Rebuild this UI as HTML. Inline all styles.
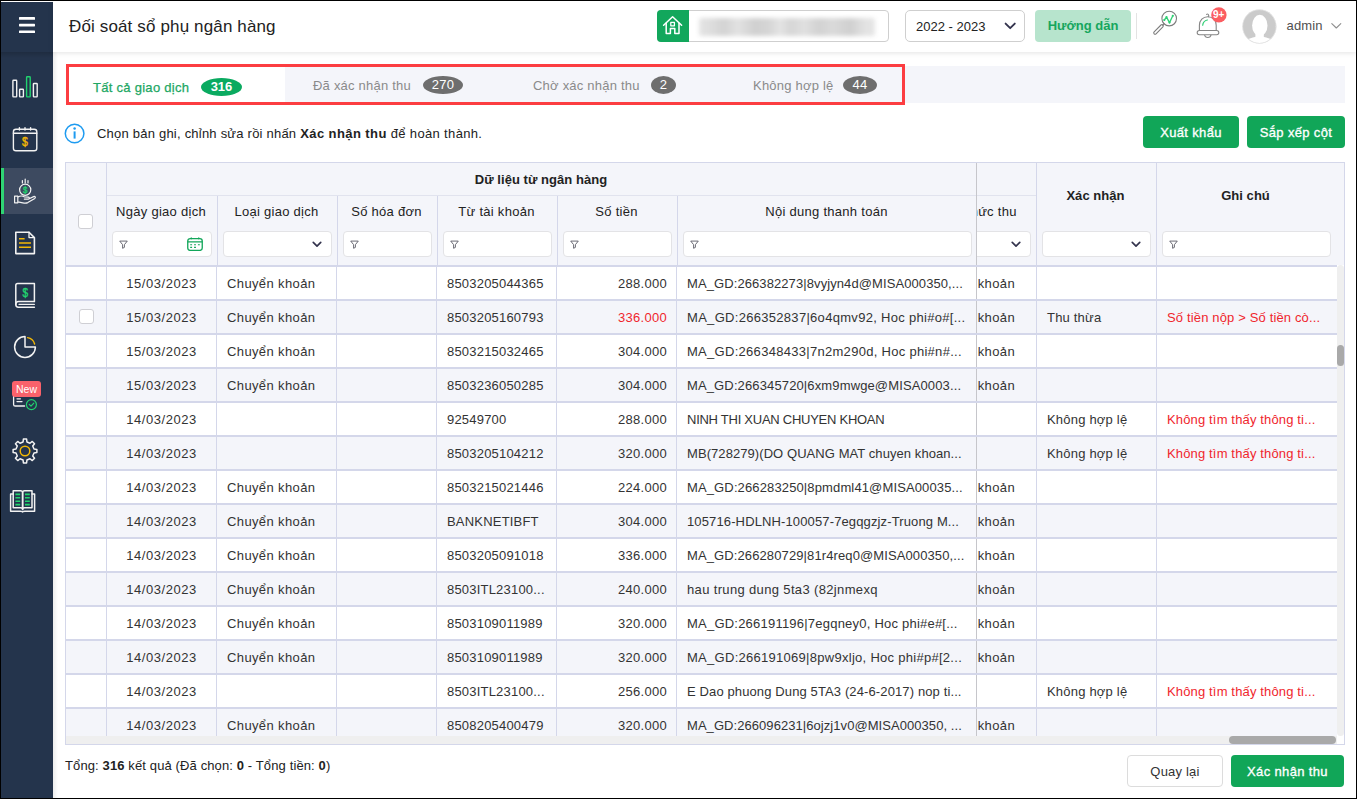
<!DOCTYPE html>
<html lang="vi">
<head>
<meta charset="utf-8">
<title>Đối soát sổ phụ ngân hàng</title>
<style>
*{box-sizing:border-box;margin:0;padding:0}
html,body{width:1357px;height:799px;overflow:hidden;background:#fff}
body{font-family:"Liberation Sans",sans-serif;font-size:13px;color:#222;position:relative}
.abs{position:absolute}
#frame{position:absolute;left:0;top:0;width:1357px;height:799px;border:1px solid #000;z-index:100;pointer-events:none}
/* sidebar */
#side{position:absolute;left:1px;top:2px;width:52px;height:796px;background:#24344c}
#side .top{position:absolute;left:0;top:0;width:52px;height:51px;background:#24344c}
#side .active{position:absolute;left:0;top:166px;width:52px;height:46px;background:#3d4a60;border-left:3px solid #2fd574}
#side svg{position:absolute;overflow:visible}
/* header */
#hdr{position:absolute;left:53px;top:1px;width:1303px;height:51px;background:#fff;box-shadow:0 1px 5px rgba(0,0,0,.11);z-index:2}
#sideshadow{position:absolute;left:53px;top:52px;width:5px;height:746px;background:linear-gradient(90deg,rgba(0,0,0,.07),rgba(0,0,0,0));z-index:1}
#sideband{position:absolute;left:1px;top:52px;width:52px;height:6px;background:linear-gradient(180deg,rgba(0,0,0,.16),rgba(0,0,0,0));z-index:3}
#title{z-index:3;position:absolute;left:69px;top:16px;font-size:17px;line-height:22px;color:#222;white-space:nowrap;letter-spacing:.14px}
#org{z-index:3;position:absolute;left:657px;top:10px;width:232px;height:32px;border:1px solid #cfcfcf;border-radius:4px;background:#fff}
#org .g{position:absolute;left:-1px;top:-1px;width:32px;height:32px;background:#12a75c;border-radius:4px 0 0 4px}
#org .blur{position:absolute;left:41px;top:7px;width:176px;height:18px;background:linear-gradient(90deg,#e4e4e4 0,#dcdcdc 8%,#d3d3d3 14%,#e2e2e2 22%,#d0d0d0 32%,#d6d6d6 40%,#e4e4e4 46%,#d6d6d6 52%,#e0e0e0 60%,#d2d2d2 68%,#dadada 76%,#d0d0d0 86%,#e2e2e2 94%,#e6e6e6 100%);filter:blur(2.2px);border-radius:2px}
#year{z-index:3;position:absolute;left:905px;top:10px;width:120px;height:32px;border:1px solid #cfcfcf;border-radius:5px;background:#fff}
#year span{position:absolute;left:10px;top:8px;line-height:16px;font-size:13px;color:#222}
#guide{z-index:3;position:absolute;left:1035px;top:10px;width:96px;height:32px;border-radius:4px;background:#b7e4cd;color:#16a65d;font-weight:bold;font-size:13px;line-height:32px;text-align:center}
#sep{z-index:3;position:absolute;left:1136px;top:13px;width:1px;height:26px;background:#e3e3e3}
#admin{z-index:3;position:absolute;left:1286.5px;top:18px;font-size:13px;line-height:16px;color:#505050;letter-spacing:.15px}
/* tabs */
#tabs{position:absolute;left:66px;top:66px;width:1279px;height:37px;background:#f4f5fa}
#tabs .act{position:absolute;left:0;top:0;width:219px;height:37px;background:#fff}
#redbox{position:absolute;left:66px;top:64px;width:839px;height:41px;border:3px solid #fc3d41}
.tab{position:absolute;top:78px;font-size:13px;line-height:16px;color:#8a8a8a;white-space:nowrap;letter-spacing:.22px}
.badge{position:absolute;top:76px;height:18px;border-radius:50%;background:#6e6e6e;color:#fff;font-size:13px;line-height:18px;text-align:center;letter-spacing:.3px}
/* info row */
#info{position:absolute;left:97px;top:126px;font-size:13px;line-height:16px;color:#222;white-space:nowrap;letter-spacing:.22px}
.gbtn{position:absolute;height:32px;border-radius:4px;background:#11a658;color:#fff;font-weight:normal;-webkit-text-stroke:.32px #fff;letter-spacing:.35px;font-size:13px;line-height:34px;text-align:center;white-space:nowrap}
/* table */
#tbl{position:absolute;left:65px;top:162px;width:1280px;height:583px;border:1px solid #d4d7ea;background:#fff;overflow:hidden}
#thead{position:absolute;left:66px;top:163px;width:1271px;height:103px;background:#f4f5fa}
.vl{position:absolute;width:1px;background:#d4d7ea}
.hl{position:absolute;height:1px;background:#e1e3ee}
.th{position:absolute;font-size:13px;line-height:16px;color:#222;text-align:center;white-space:nowrap;letter-spacing:.28px}
.th.b{font-weight:bold;letter-spacing:.05px}
.fi{position:absolute;top:231px;height:26px;border:1px solid #e3e3e6;border-radius:4px;background:#fff}
.row{position:absolute;left:66px;width:1271px;height:34px;border-top:2px solid #d4d7ea;background:#fff}
.row.alt{background:#f4f5fa}
.c{position:absolute;top:0;height:32px;line-height:33px;font-size:13px;color:#333;white-space:nowrap;overflow:hidden;border-left:1px solid #d4d7ea;letter-spacing:.2px}
.c0{left:0;width:40px;border-left:0}
.c1{left:40px;width:110px;text-align:center;letter-spacing:.55px;padding-left:0}
.c2{left:150px;width:120px;padding-left:10px;letter-spacing:.38px}
.c3{left:270px;width:100px}
.c4{left:370px;width:120px;padding-left:10px}
.c5{left:490px;width:120px;text-align:right;padding-right:9px;letter-spacing:.3px}
.c6{left:610px;width:300px;padding-left:10px;letter-spacing:.12px}
.c7{left:910px;width:60px;border-left:1px solid #c6c6cb;padding-left:0}
.c7 span{position:absolute;right:21px;top:0;letter-spacing:.38px}
.c8{left:970px;width:120px;padding-left:10px}
.c9{left:1090px;width:181px;padding-left:10px;letter-spacing:.15px}
.red{color:#f0262d}
.cb{position:absolute;left:13px;top:8px;width:15px;height:15px;border:1px solid #cfcfd4;border-radius:3px;background:#fff}
#foot{position:absolute;left:65px;top:758px;font-size:13px;line-height:16px;color:#222;white-space:nowrap;letter-spacing:.12px}
#back{position:absolute;left:1127px;top:755px;width:96px;height:32px;border:1px solid #dcdcdc;border-radius:4px;background:#fff;color:#333;font-size:13px;line-height:32px;text-align:center;letter-spacing:.2px}
</style>
</head>
<body>
<!-- sidebar -->
<div id="side">
  <div class="top"></div>
  <div class="active"></div>
  <svg class="abs" style="left:-1px;top:-2px;z-index:5" width="54" height="799" viewBox="0 0 54 799" fill="none" stroke-linecap="round" stroke-linejoin="round">
<!-- hamburger -->
<g fill="#fff" stroke="none"><rect x="19" y="17" width="16" height="2.8" rx=".6"/><rect x="19" y="23.8" width="16" height="2.6" rx=".6"/><rect x="19" y="30.4" width="16" height="2.7" rx=".6"/></g>
<!-- bar chart -->
<g stroke="#f2f2f2" stroke-width="1.4"><rect x="12.9" y="80.3" width="3.8" height="16.6" rx=".6"/><rect x="19.6" y="89.3" width="3.8" height="7.6" rx=".6"/><rect x="33.4" y="83.5" width="3.8" height="13.4" rx=".6"/><rect x="26.6" y="76.8" width="3.6" height="20.1" rx=".6" stroke="#21d36f"/></g>
<!-- calendar -->
<g stroke="#f2f2f2" stroke-width="1.4"><rect x="13.4" y="129.2" width="23.4" height="21.6" rx="2.6"/><path d="M13.4 133.2H36.8"/><path d="M19.4 127.6v2.4M25 127.6v2.4M30.6 127.6v2.4"/></g>
<text transform="translate(24.8 146) scale(.84 1)" text-anchor="middle" font-family="Liberation Sans, sans-serif" font-size="12.5" fill="#f2b705" stroke="#f2b705" stroke-width=".45">$</text>
<!-- hand coin -->
<g stroke="#f2f2f2" stroke-width="1.2"><circle cx="25.2" cy="189.8" r="5.6"/><path d="M22.4 180.6v2.4M25.2 179v4M28 180.6v2.4"/><path d="M14.6 196.2h3.2v6.6h-3.2zM17.8 197.2c2.4-1.6 4.6-1.6 6.8-.2l3.8 .2c1.2.2 1.2 1.8 0 2h-4M28.6 199l5-2.4c1.4-.6 2.4.8 1.2 1.8l-7 4.2c-1.4.6-3 .6-5 .2l-5-1"/></g>
<text transform="translate(25.2 193) scale(.84 1)" text-anchor="middle" font-family="Liberation Sans, sans-serif" font-size="9.5" fill="#21d36f" stroke="#21d36f" stroke-width=".4">$</text>
<!-- document -->
<g stroke="#f2f2f2" stroke-width="1.6"><path d="M15.8 232.2H29L34.4 237.6V253.6H15.8Z"/><path d="M29 232.2V237.6H34.4" stroke-width="1.3"/></g>
<g stroke="#f2b705" stroke-width="1.5" stroke-linecap="butt"><path d="M19 238.8H24.6M19 243H31M19 247.2H31"/></g>
<!-- book $ -->
<g stroke="#f2f2f2" stroke-width="1.5"><path d="M34.4 301.6V283.4H17.6C16.4 283.4 15.8 284.2 15.8 285.4V304.6"/><path d="M34.4 301.6H18.4C16.8 301.6 15.8 302.8 15.8 304.6S16.8 307.2 18.4 307.2H34.4" /><path d="M19 304.4H34.4" stroke-width="1.1"/></g>
<text transform="translate(25.3 296.6) scale(.84 1)" text-anchor="middle" font-family="Liberation Sans, sans-serif" font-size="12" fill="#21d36f" stroke="#21d36f" stroke-width=".45">$</text>
<!-- pie -->
<g stroke="#f2f2f2" stroke-width="1.5"><path d="M25 336.6A10.4 10.4 0 1 0 35.4 347H25Z"/></g>
<path d="M27.6 337.6A8.6 8.6 0 0 1 34.6 344" stroke="#f2b705" stroke-width="1.4"/>
<!-- list check (under New) -->
<g stroke="#f2f2f2" stroke-width="1.3"><path d="M13.6 396V404.4C13.6 405.4 14.2 406 15.2 406H24.6"/><path d="M17 398.8H20.4M17 401.6H22"/></g>
<circle cx="31.4" cy="404.6" r="5" stroke="#21d36f" stroke-width="1.2"/><path d="M29.2 404.4L31 406.2L33.8 403.2" stroke="#21d36f" stroke-width="1.2"/>
<!-- gear -->
<path d="M23.06 442.01 L23.40 439.11 L26.60 439.11 L26.94 442.01 L29.99 443.27 L32.28 441.46 L34.54 443.72 L32.73 446.01 L33.99 449.06 L36.89 449.40 L36.89 452.60 L33.99 452.94 L32.73 455.99 L34.54 458.28 L32.28 460.54 L29.99 458.73 L26.94 459.99 L26.60 462.89 L23.40 462.89 L23.06 459.99 L20.01 458.73 L17.72 460.54 L15.46 458.28 L17.27 455.99 L16.01 452.94 L13.11 452.60 L13.11 449.40 L16.01 449.06 L17.27 446.01 L15.46 443.72 L17.72 441.46 L20.01 443.27Z" stroke="#f2f2f2" stroke-width="1.5"/>
<circle cx="25" cy="451" r="4.8" stroke="#f2b705" stroke-width="1.5"/>
<!-- open book -->
<g stroke="#f2f2f2" stroke-width="1.5"><path d="M13.2 490.8H20.6C22 490.8 22.6 491.4 22.6 492.6V509.4C22.6 508.4 22 507.8 20.6 507.8H13.2Z"/><path d="M32 490.8H24.6C23.2 490.8 22.6 491.4 22.6 492.6V509.4C22.6 508.4 23.2 507.8 24.6 507.8H32Z"/><path d="M13.2 494H10.6V511.2H20.4C21.6 511.2 22.6 511.6 22.6 512C22.6 511.6 23.6 511.2 24.8 511.2H34.6V494H32"/></g>
<g stroke="#21d36f" stroke-width="1.6" stroke-linecap="butt"><path d="M15.4 494.4H20.2M15.4 497.8H20.2M15.4 501.2H20.2M15.4 504.6H20.2M25 494.4H29.8M25 497.8H29.8M25 501.2H29.8M25 504.6H29.8"/></g>
</svg>
<div class="abs" style="left:11px;top:379px;width:29px;height:16px;border-radius:3px;background:#fa626b;color:#fff;font-size:10.5px;line-height:16px;text-align:center;z-index:6">New</div>

</div>

<!-- header -->
<div id="hdr"></div><div id="sideshadow"></div><div id="sideband"></div>
<div id="title">Đối soát sổ phụ ngân hàng</div>
<div id="org"><div class="g"></div><div class="blur"></div></div>
<div id="year"><span>2022 - 2023</span></div>
<div id="guide">Hướng dẫn</div>
<div id="sep"></div>
<div id="admin">admin</div>
<svg class="abs" style="left:0;top:0;z-index:4" width="1357" height="160" viewBox="0 0 1357 160" fill="none" stroke-linecap="round" stroke-linejoin="round">
<!-- home -->
<g stroke="#fff" stroke-width="1.5"><path d="M663.6 25.2L672.6 16.8L681.6 25.2"/><path d="M666.2 23.2V33.6H670.4V28.6H674.8V33.6H679V23.2" /><rect x="670.8" y="22.4" width="3.6" height="3.4" stroke-width="1.3"/></g>
<!-- year chevron -->
<path d="M1005.6 23.6L1010.2 28.2L1014.8 23.6" stroke="#33334d" stroke-width="1.9"/>
<!-- magnifier -->
<g stroke="#7d7d7d" stroke-width="1.1"><circle cx="1169.2" cy="18.6" r="7.3"/><path d="M1164.1 23.7L1162.6 25.2"/><rect x="-1.35" y="0" width="2.7" height="12.4" rx="1.35" transform="translate(1162.9 25) rotate(45)"/></g>
<path d="M1164.3 20L1166.5 17.1L1169.5 22.6L1172.8 15.8" stroke="#2fcf74" stroke-width="1.3"/>
<g fill="#2fcf74"><circle cx="1164.3" cy="20" r="1.1"/><circle cx="1166.5" cy="17.1" r="1.1"/><circle cx="1169.5" cy="22.6" r="1.1"/><circle cx="1172.8" cy="15.8" r="1.1"/></g>
<!-- bell -->
<g stroke="#858585" stroke-width="1.1"><path d="M1199.4 30.6V25.2C1199.4 20.4 1203 16.7 1207.8 16.7C1212.6 16.7 1216.2 20.4 1216.2 25.2V30.6"/><path d="M1208.6 16.6C1209.2 14.6 1207.6 13.4 1206.6 14.4"/><path d="M1204.6 35C1205.2 38.4 1210.4 38.4 1211 35"/><rect x="1197.2" y="30.5" width="21.6" height="4.2" rx="2.1" fill="#fff"/></g>
<path d="M1202.7 25.2C1203 22.6 1204.8 20.6 1207.4 20" stroke="#2fcf74" stroke-width="1.2"/>
<circle cx="1218.9" cy="14.9" r="7.7" fill="#fb5d61"/>
<text x="1218.7" y="18.4" text-anchor="middle" font-family="Liberation Sans, sans-serif" font-weight="bold" font-size="10" fill="#fff">9+</text>
<!-- avatar -->
<circle cx="1259.4" cy="26.5" r="17" fill="#cbcbcb"/>
<clipPath id="avc"><circle cx="1259.4" cy="26.5" r="16.6"/></clipPath>
<g clip-path="url(#avc)" fill="#fff"><ellipse cx="1259.8" cy="25.4" rx="7.7" ry="10.6"/><path d="M1255.4 30H1263.8V40H1255.4Z"/><ellipse cx="1259.5" cy="48.4" rx="17.5" ry="12"/></g>
<circle cx="1259.4" cy="26.5" r="16.8" stroke="#ececec" stroke-width=".6"/>
<!-- admin chevron -->
<path d="M1331.8 23.6L1336.3 28L1340.8 23.6" stroke="#8f8f8f" stroke-width="1.1"/>
<!-- info icon -->
<circle cx="74.6" cy="133.5" r="9.3" stroke="#1e9bf0" stroke-width="1.5"/>
<path d="M74.6 131.4V138.6" stroke="#1e9bf0" stroke-width="2" stroke-linecap="butt"/><circle cx="74.6" cy="128.5" r="1.25" fill="#1e9bf0"/>
</svg>


<!-- tabs -->
<div id="tabs"><div class="act"></div></div>
<div class="tab" style="left:93px;top:80px;color:#21a763;-webkit-text-stroke:.25px #21a763;letter-spacing:.28px">Tất cả giao dịch</div>
<div class="badge" style="left:201px;top:78px;width:41px;background:#0aaa60;font-weight:bold;letter-spacing:0">316</div>
<div class="tab" style="left:313px">Đã xác nhận thu</div>
<div class="badge" style="left:423px;width:40px">270</div>
<div class="tab" style="left:533px">Chờ xác nhận thu</div>
<div class="badge" style="left:651px;width:25px">2</div>
<div class="tab" style="left:753px">Không hợp lệ</div>
<div class="badge" style="left:843px;width:34px">44</div>
<div id="redbox"></div>

<!-- info -->
<div id="info">Chọn bản ghi, chỉnh sửa rồi nhấn <b style="letter-spacing:.42px">Xác nhận thu</b><span style="letter-spacing:.34px"> để hoàn thành.</span></div>
<div class="gbtn" style="left:1143px;top:116px;width:96px">Xuất khẩu</div>
<div class="gbtn" style="left:1247px;top:116px;width:98px">Sắp xếp cột</div>

<!-- table -->
<div id="tbl"></div>
<div id="thead"></div>
<div class="row" style="top:265px">
<div class="c c0"></div><div class="c c1">15/03/2023</div><div class="c c2">Chuyển khoản</div><div class="c c3"></div><div class="c c4">8503205044365</div><div class="c c5">288.000</div><div class="c c6" style="letter-spacing:0.09px">MA_GD:266382273|8vyjyn4d@MISA000350,...</div><div class="c c7"><span>Chuyển khoản</span></div><div class="c c8"></div><div class="c c9 red"></div>
</div>
<div class="row alt" style="top:299px">
<div class="c c0"><span class="cb"></span></div><div class="c c1">15/03/2023</div><div class="c c2">Chuyển khoản</div><div class="c c3"></div><div class="c c4">8503205160793</div><div class="c c5 red">336.000</div><div class="c c6" style="letter-spacing:0.3px">MA_GD:266352837|6o4qmv92, Hoc phi#o#[...</div><div class="c c7"><span>Chuyển khoản</span></div><div class="c c8">Thu thừa</div><div class="c c9 red">Số tiền nộp &gt; Số tiền cò...</div>
</div>
<div class="row" style="top:333px">
<div class="c c0"></div><div class="c c1">15/03/2023</div><div class="c c2">Chuyển khoản</div><div class="c c3"></div><div class="c c4">8503215032465</div><div class="c c5">304.000</div><div class="c c6" style="letter-spacing:0.29px">MA_GD:266348433|7n2m290d, Hoc phi#n#...</div><div class="c c7"><span>Chuyển khoản</span></div><div class="c c8"></div><div class="c c9 red"></div>
</div>
<div class="row alt" style="top:367px">
<div class="c c0"></div><div class="c c1">15/03/2023</div><div class="c c2">Chuyển khoản</div><div class="c c3"></div><div class="c c4">8503236050285</div><div class="c c5">304.000</div><div class="c c6" style="letter-spacing:0.13px">MA_GD:266345720|6xm9mwge@MISA0003...</div><div class="c c7"><span>Chuyển khoản</span></div><div class="c c8"></div><div class="c c9 red"></div>
</div>
<div class="row" style="top:401px">
<div class="c c0"></div><div class="c c1">14/03/2023</div><div class="c c2"></div><div class="c c3"></div><div class="c c4">92549700</div><div class="c c5">288.000</div><div class="c c6" style="letter-spacing:-0.26px">NINH THI XUAN CHUYEN KHOAN</div><div class="c c7"><span></span></div><div class="c c8">Không hợp lệ</div><div class="c c9 red">Không tìm thấy thông ti...</div>
</div>
<div class="row alt" style="top:435px">
<div class="c c0"></div><div class="c c1">14/03/2023</div><div class="c c2"></div><div class="c c3"></div><div class="c c4">8503205104212</div><div class="c c5">320.000</div><div class="c c6" style="letter-spacing:0.07px">MB(728279)(DO QUANG MAT chuyen khoan...</div><div class="c c7"><span></span></div><div class="c c8">Không hợp lệ</div><div class="c c9 red">Không tìm thấy thông ti...</div>
</div>
<div class="row" style="top:469px">
<div class="c c0"></div><div class="c c1">14/03/2023</div><div class="c c2">Chuyển khoản</div><div class="c c3"></div><div class="c c4">8503215021446</div><div class="c c5">224.000</div><div class="c c6" style="letter-spacing:0.13px">MA_GD:266283250|8pmdml41@MISA00035...</div><div class="c c7"><span>Chuyển khoản</span></div><div class="c c8"></div><div class="c c9 red"></div>
</div>
<div class="row alt" style="top:503px">
<div class="c c0"></div><div class="c c1">14/03/2023</div><div class="c c2">Chuyển khoản</div><div class="c c3"></div><div class="c c4">BANKNETIBFT</div><div class="c c5">304.000</div><div class="c c6" style="letter-spacing:0.13px">105716-HDLNH-100057-7egqgzjz-Truong M...</div><div class="c c7"><span>Chuyển khoản</span></div><div class="c c8"></div><div class="c c9 red"></div>
</div>
<div class="row" style="top:537px">
<div class="c c0"></div><div class="c c1">14/03/2023</div><div class="c c2">Chuyển khoản</div><div class="c c3"></div><div class="c c4">8503205091018</div><div class="c c5">336.000</div><div class="c c6" style="letter-spacing:0.11px">MA_GD:266280729|81r4req0@MISA000350,...</div><div class="c c7"><span>Chuyển khoản</span></div><div class="c c8"></div><div class="c c9 red"></div>
</div>
<div class="row alt" style="top:571px">
<div class="c c0"></div><div class="c c1">14/03/2023</div><div class="c c2">Chuyển khoản</div><div class="c c3"></div><div class="c c4">8503ITL23100...</div><div class="c c5">240.000</div><div class="c c6" style="letter-spacing:0.35px">hau trung dung 5ta3 (82jnmexq</div><div class="c c7"><span>Chuyển khoản</span></div><div class="c c8"></div><div class="c c9 red"></div>
</div>
<div class="row" style="top:605px">
<div class="c c0"></div><div class="c c1">14/03/2023</div><div class="c c2">Chuyển khoản</div><div class="c c3"></div><div class="c c4">8503109011989</div><div class="c c5">320.000</div><div class="c c6" style="letter-spacing:0.22px">MA_GD:266191196|7egqney0, Hoc phi#e#[...</div><div class="c c7"><span>Chuyển khoản</span></div><div class="c c8"></div><div class="c c9 red"></div>
</div>
<div class="row alt" style="top:639px">
<div class="c c0"></div><div class="c c1">14/03/2023</div><div class="c c2">Chuyển khoản</div><div class="c c3"></div><div class="c c4">8503109011989</div><div class="c c5">320.000</div><div class="c c6" style="letter-spacing:0.28px">MA_GD:266191069|8pw9xljo, Hoc phi#p#[2...</div><div class="c c7"><span>Chuyển khoản</span></div><div class="c c8"></div><div class="c c9 red"></div>
</div>
<div class="row" style="top:673px">
<div class="c c0"></div><div class="c c1">14/03/2023</div><div class="c c2"></div><div class="c c3"></div><div class="c c4">8503ITL23100...</div><div class="c c5">256.000</div><div class="c c6" style="letter-spacing:0.12px">E Dao phuong Dung 5TA3 (24-6-2017) nop ti...</div><div class="c c7"><span></span></div><div class="c c8">Không hợp lệ</div><div class="c c9 red">Không tìm thấy thông ti...</div>
</div>
<div class="row alt" style="top:707px">
<div class="c c0"></div><div class="c c1">14/03/2023</div><div class="c c2">Chuyển khoản</div><div class="c c3"></div><div class="c c4">8508205400479</div><div class="c c5">320.000</div><div class="c c6" style="letter-spacing:0.06px">MA_GD:266096231|6ojzj1v0@MISA000350, ...</div><div class="c c7"><span>Chuyển khoản</span></div><div class="c c8"></div><div class="c c9 red"></div>
</div>
<!-- header lines -->
<div class="vl" style="left:106px;top:163px;height:102px"></div>
<div class="hl" style="left:107px;top:195px;width:929px"></div>
<div class="vl" style="left:217px;top:196px;height:69px"></div>
<div class="vl" style="left:337px;top:196px;height:69px"></div>
<div class="vl" style="left:437px;top:196px;height:69px"></div>
<div class="vl" style="left:557px;top:196px;height:69px"></div>
<div class="vl" style="left:677px;top:196px;height:69px"></div>
<div class="vl" style="left:976px;top:163px;height:102px;background:#c6c6cb"></div>
<div class="vl" style="left:1036px;top:163px;height:102px"></div>
<div class="vl" style="left:1156px;top:163px;height:102px"></div>
<!-- header labels -->
<div class="th b" style="left:106px;width:870px;top:172px">Dữ liệu từ ngân hàng</div>
<div class="th" style="left:106px;width:110px;top:204px">Ngày giao dịch</div>
<div class="th" style="left:217px;width:119px;top:204px">Loại giao dịch</div>
<div class="th" style="left:337px;width:99px;top:204px">Số hóa đơn</div>
<div class="th" style="left:437px;width:119px;top:204px">Từ tài khoản</div>
<div class="th" style="left:557px;width:119px;top:204px">Số tiền</div>
<div class="th" style="left:677px;width:299px;top:204px">Nội dung thanh toán</div>
<div class="abs" style="left:977px;top:196px;width:59px;height:69px;overflow:hidden">
  <div class="th" style="left:-61px;width:119px;top:8px">Hình thức thu</div>
  <div class="fi" style="left:-55px;top:35px;width:109px"><svg class="abs" style="right:9px;top:9px" width="10" height="7" viewBox="0 0 12 8"><path d="M1.5 1.5L6 6L10.5 1.5" fill="none" stroke="#33334d" stroke-width="2" stroke-linecap="round" stroke-linejoin="round"/></svg></div>
</div>
<div class="th b" style="left:1036px;width:119px;top:188px">Xác nhận</div>
<div class="th b" style="left:1156px;width:179px;top:188px">Ghi chú</div>
<div class="cb" style="left:78px;top:214px"></div>
<!-- filters -->
<div class="fi" style="left:112px;width:100px"><svg class="abs" style="left:6px;top:8px" width="9" height="9" viewBox="0 0 10 10"><path d="M0.8 1.2H9.2L6 5.2V8.2L4 9.2V5.2Z" fill="none" stroke="#5b5b66" stroke-width="1" stroke-linejoin="round"/></svg>
 <svg class="abs" style="left:74px;top:5px" width="16" height="14.2" viewBox="0 0 17 15"><rect x="0.8" y="1.6" width="15.4" height="12.6" rx="2.6" fill="none" stroke="#12a65a" stroke-width="1.4"/><path d="M0.8 5.2H16.2M4.6 0.4V2.4M12.4 0.4V2.4" stroke="#12a65a" stroke-width="1.4" fill="none"/><path d="M3.4 8.2H5.4M7.5 8.2H9.5M11.6 8.2H13.6M3.4 11H5.4M7.5 11H9.5" stroke="#12a65a" stroke-width="1.3"/></svg></div>
<div class="fi" style="left:223px;width:109px"><svg class="abs" style="right:9px;top:9px" width="10" height="7" viewBox="0 0 12 8"><path d="M1.5 1.5L6 6L10.5 1.5" fill="none" stroke="#33334d" stroke-width="2" stroke-linecap="round" stroke-linejoin="round"/></svg></div>
<div class="fi" style="left:343px;width:89px"><svg class="abs" style="left:6px;top:8px" width="9" height="9" viewBox="0 0 10 10"><path d="M0.8 1.2H9.2L6 5.2V8.2L4 9.2V5.2Z" fill="none" stroke="#5b5b66" stroke-width="1" stroke-linejoin="round"/></svg></div>
<div class="fi" style="left:443px;width:109px"><svg class="abs" style="left:6px;top:8px" width="9" height="9" viewBox="0 0 10 10"><path d="M0.8 1.2H9.2L6 5.2V8.2L4 9.2V5.2Z" fill="none" stroke="#5b5b66" stroke-width="1" stroke-linejoin="round"/></svg></div>
<div class="fi" style="left:563px;width:109px"><svg class="abs" style="left:6px;top:8px" width="9" height="9" viewBox="0 0 10 10"><path d="M0.8 1.2H9.2L6 5.2V8.2L4 9.2V5.2Z" fill="none" stroke="#5b5b66" stroke-width="1" stroke-linejoin="round"/></svg></div>
<div class="fi" style="left:683px;width:289px"><svg class="abs" style="left:6px;top:8px" width="9" height="9" viewBox="0 0 10 10"><path d="M0.8 1.2H9.2L6 5.2V8.2L4 9.2V5.2Z" fill="none" stroke="#5b5b66" stroke-width="1" stroke-linejoin="round"/></svg></div>
<div class="fi" style="left:1042px;width:109px"><svg class="abs" style="right:9px;top:9px" width="10" height="7" viewBox="0 0 12 8"><path d="M1.5 1.5L6 6L10.5 1.5" fill="none" stroke="#33334d" stroke-width="2" stroke-linecap="round" stroke-linejoin="round"/></svg></div>
<div class="fi" style="left:1162px;width:169px"><svg class="abs" style="left:6px;top:8px" width="9" height="9" viewBox="0 0 10 10"><path d="M0.8 1.2H9.2L6 5.2V8.2L4 9.2V5.2Z" fill="none" stroke="#5b5b66" stroke-width="1" stroke-linejoin="round"/></svg></div>
<!-- scrollbars -->
<div class="abs" style="left:1337px;top:163px;width:7px;height:102px;background:#f4f5fa"></div>
<div class="abs" style="left:1337px;top:265px;width:7px;height:471px;background:#efefef;border-radius:4px"></div>
<div class="abs" style="left:1337px;top:345px;width:7px;height:21px;border-radius:4px;background:#a9a9a9"></div>
<div class="abs" style="left:66px;top:736px;width:1271px;height:8px;background:#efefef"></div><div class="abs" style="left:1337px;top:736px;width:7px;height:8px;background:#fff"></div>
<div class="abs" style="left:1229px;top:736px;width:107px;height:8px;border-radius:4px;background:#a9a9a9"></div>


<!-- footer -->
<div id="foot">Tổng: <b>316</b> kết quả (Đã chọn: <b>0</b> - Tổng tiền: <b>0</b>)</div>
<div id="back">Quay lại</div>
<div class="gbtn" style="left:1231px;top:755px;width:113px">Xác nhận thu</div>

<div id="frame"></div>
</body>
</html>
